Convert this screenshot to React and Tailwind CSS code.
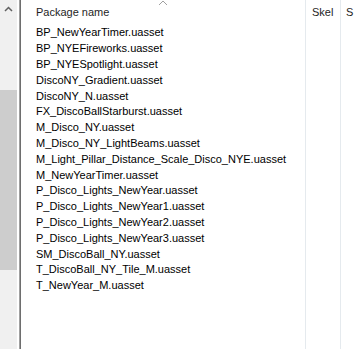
const files = [
  'BP_NewYearTimer.uasset',
  'BP_NYEFireworks.uasset',
  'BP_NYESpotlight.uasset',
  'DiscoNY_Gradient.uasset',
  'DiscoNY_N.uasset',
  'FX_DiscoBallStarburst.uasset',
  'M_Disco_NY.uasset',
  'M_Disco_NY_LightBeams.uasset',
  'M_Light_Pillar_Distance_Scale_Disco_NYE.uasset',
  'M_NewYearTimer.uasset',
  'P_Disco_Lights_NewYear.uasset',
  'P_Disco_Lights_NewYear1.uasset',
  'P_Disco_Lights_NewYear2.uasset',
  'P_Disco_Lights_NewYear3.uasset',
  'SM_DiscoBall_NY.uasset',
  'T_DiscoBall_NY_Tile_M.uasset',
  'T_NewYear_M.uasset',
];

export default function App() {
  return (
    <div className="flex w-[356px] h-[349px] overflow-hidden bg-white text-[11px] leading-none text-black font-['Liberation_Sans',Arial,sans-serif]">
      {/* vertical scrollbar */}
      <div className="flex flex-col w-[17px] shrink-0 bg-[#f0f0f0]">
        <div className="flex h-[17px] items-center justify-center">
          <svg width="9" height="6" viewBox="0 0 9 6">
            <path d="M1 5 L4.5 1.5 L8 5" fill="none" stroke="#606060" strokeWidth="1.5" />
          </svg>
        </div>
        <div className="mt-[73px] h-[180px] bg-[#cdcdcd]" />
      </div>
      <div className="w-[2px] shrink-0" />
      <div className="w-px shrink-0 bg-[#a0a0a0]" />
      <div className="w-px shrink-0 bg-[#6e6e6e]" />

      {/* list view */}
      <div className="flex flex-1">
        <div className="relative flex flex-col w-[285px] shrink-0 border-r border-[#e5eaee]">
          <svg className="absolute left-1/2 top-0 -translate-x-1/2" width="9" height="6" viewBox="0 0 9 6">
            <path d="M0.5 5 L4.5 1 L8.5 5" fill="none" stroke="#a0a0a0" strokeWidth="1" />
          </svg>
          <div className="flex h-[25px] items-center pl-[15px] text-[#1e1e1e]">Package name</div>
          {files.map((f) => (
            <div key={f} className="flex h-[15.8px] items-center pl-[15px] whitespace-nowrap">
              {f}
            </div>
          ))}
        </div>
        <div className="flex flex-col w-[35px] shrink-0 border-r border-[#e5eaee]">
          <div className="flex h-[25px] items-center pl-[6px] text-[#1e1e1e]">Skel</div>
        </div>
        <div className="flex flex-col flex-1">
          <div className="flex h-[25px] items-center pl-[5px] text-[#1e1e1e]">S</div>
        </div>
      </div>
    </div>
  );
}
